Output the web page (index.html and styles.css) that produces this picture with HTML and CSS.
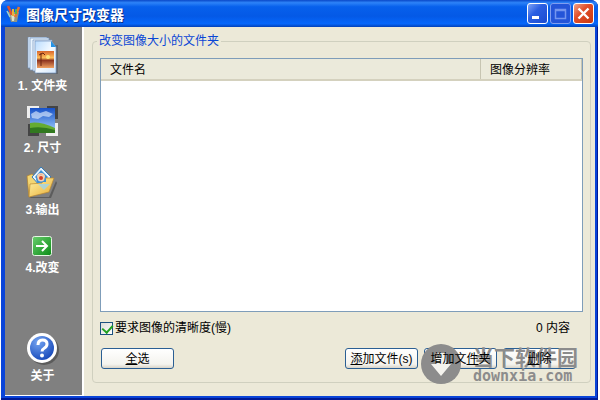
FILE: index.html
```html
<!DOCTYPE html>
<html lang="zh-CN">
<head>
<meta charset="utf-8">
<title>图像尺寸改变器</title>
<link rel="stylesheet" href="styles.css">
</head>
<body>
<div class="window">
  <header class="titlebar">
    <svg class="app-icon" width="16" height="18" viewBox="0 0 16 18" aria-hidden="true">
      <path d="M2 7h11l-2 10H5z" fill="#8f9487"/>
      <path d="M5 9h4l-1 7H6z" fill="#dfe2c9"/>
      <path d="M2 1l4 9" stroke="#e0522d" stroke-width="2.500"/>
      <path d="M7 4v7" stroke="#e9b33a" stroke-width="2"/>
      <path d="M13 2l-4 10" stroke="#e8742c" stroke-width="2.500"/>
      <path d="M10 4v5" stroke="#59b04c" stroke-width="2"/>
      <path d="M1 6l3 6" stroke="#9fd0c8" stroke-width="1.500"/>
    </svg>
    <h1 class="title">图像尺寸改变器</h1>
    <div class="controls">
      <button class="control" type="button" aria-label="最小化">
        <svg width="19" height="19" viewBox="0 0 19 19"><path d="M4 12h7v3H4z" fill="#fff"/></svg>
      </button>
      <button class="control control-dim" type="button" aria-label="最大化" disabled>
        <svg width="19" height="19" viewBox="0 0 19 19"><path d="M4.500 5.500h10v9h-10zM4 6.500h11" fill="none" stroke="#7595ee" stroke-width="1.500"/></svg>
      </button>
      <button class="control control-close" type="button" aria-label="关闭">
        <svg width="19" height="19" viewBox="0 0 19 19"><path d="M4.500 4.500l10 10M14.500 4.500l-10 10" stroke="#fff" stroke-width="2.400"/></svg>
      </button>
    </div>
  </header>

  <div class="content">
    <nav class="sidebar">
      <button class="step" type="button">
        <svg width="32" height="38" viewBox="0 0 32 38" aria-hidden="true">
          <defs>
            <linearGradient id="paper" x1="0" y1="0" x2="1" y2="1"><stop offset="0" stop-color="#b9dcff"/><stop offset="0.500" stop-color="#f5faff"/><stop offset="1" stop-color="#d3e6fb"/></linearGradient>
            <linearGradient id="sunset" x1="0" y1="0" x2="0" y2="1"><stop offset="0" stop-color="#d9662e"/><stop offset="0.400" stop-color="#ffc05a"/><stop offset="0.550" stop-color="#8e3420"/><stop offset="1" stop-color="#f0a161"/></linearGradient>
          </defs>
          <path d="M10 8h21v29H10z" fill="#505761" opacity="0.600"/>
          <path d="M1 0h19v31H1z" fill="#e4f1ff" stroke="#7294bb" stroke-width="0.700"/>
          <path d="M3 1h19v32H3z" fill="#e9f4ff" stroke="#7294bb" stroke-width="0.700"/>
          <path d="M6 3h19v31H6z" fill="#eef6ff" stroke="#7294bb" stroke-width="0.700"/>
          <path d="M8 4h16l5 6v26H8z" fill="url(#paper)" stroke="#7294bb" stroke-width="0.700"/>
          <path d="M24 4v6h5z" fill="#2493e6"/>
          <path d="M10 14h17v17H10z" fill="url(#sunset)"/>
          <path d="M14 16v13M12 18l4-2 2 2" fill="none" stroke="#6d2410"/>
          <circle cx="21" cy="20" r="2" fill="#ffe47c"/>
        </svg>
        <span>1. 文件夹</span>
      </button>
      <button class="step" type="button">
        <svg width="32" height="32" viewBox="0 0 32 32" aria-hidden="true">
          <defs><linearGradient id="sky" x1="0" y1="0" x2="0" y2="1"><stop offset="0" stop-color="#1550c8"/><stop offset="1" stop-color="#a8d5ff"/></linearGradient></defs>
          <path d="M0 1h12v3H3v9H0z" fill="#eee"/>
          <path d="M29 1h2v13h-3V4h-8V1z" fill="#444"/>
          <path d="M31 18v13H19v-3h9V18z" fill="#eee"/>
          <path d="M1 19v12h11v-3H4v-9z" fill="#444"/>
          <path d="M3 3h25v25H3z" fill="url(#sky)"/>
          <path d="M4 9l5-3 4 2 6-2 7 3-4 3-6-1-5 3-6-1z" fill="#e8f4ff" opacity="0.600"/>
          <path d="M3 18q9-2 25 5v5H3z" fill="#65ac32"/>
          <path d="M3 23q12-2 25 2v3H3z" fill="#31791f"/>
        </svg>
        <span>2. 尺寸</span>
      </button>
      <button class="step" type="button">
        <svg width="32" height="32" viewBox="0 0 32 32" aria-hidden="true">
          <defs><linearGradient id="folder" x1="0" y1="0" x2="1" y2="1"><stop offset="0" stop-color="#fff4a8"/><stop offset="1" stop-color="#e9ad35"/></linearGradient></defs>
          <path d="M3 30h20l7-16 1 2-6 15H5z" fill="#444" opacity="0.600"/>
          <path d="M1 9l5-2 4 3h14v9L3 30z" fill="#f3d673" stroke="#b3812b" stroke-width="0.700"/>
          <path d="M15 0l10 10-10 10L6 10z" fill="#e7f5ff" stroke="#377bb7"/>
          <path d="M15 3l7 7-7 7-6-7z" fill="#3f91d6"/>
          <circle cx="15" cy="10" r="4" fill="#f5d1b1"/><circle cx="15" cy="10" r="2.500" fill="#d44027"/>
          <path d="M3 30l1-13 12-1 4-5h8l-5 14z" fill="url(#folder)" stroke="#ba882f" stroke-width="0.700"/>
          <path d="M12 17h12l-6 6z" fill="#9ed5ec" opacity="0.800"/>
          <path d="M10 12q5-6 10 0v3h-4l-2 1h-3z" fill="#3f91d6"/>
          <circle cx="15" cy="11" r="3.500" fill="#f5d1b1"/><circle cx="15" cy="11" r="2" fill="#d44027"/>
        </svg>
        <span>3.输出</span>
      </button>
      <button class="step" type="button">
        <svg width="32" height="28" viewBox="0 0 32 28" aria-hidden="true">
          <defs><linearGradient id="go" x1="0" y1="0" x2="1" y2="1"><stop offset="0" stop-color="#69ce6d"/><stop offset="1" stop-color="#0a8b16"/></linearGradient></defs>
          <rect x="6.500" y="7.500" width="19" height="19" rx="2" fill="url(#go)" stroke="#e7f6e5"/>
          <path d="M10 17h11M16 12l5 5-5 5" fill="none" stroke="#fff" stroke-width="2"/>
        </svg>
        <span>4.改变</span>
      </button>
      <button class="step step-about" type="button">
        <svg width="32" height="32" viewBox="0 0 32 32" aria-hidden="true">
          <defs><radialGradient id="help" cx="0.350" cy="0.250" r="0.800"><stop offset="0" stop-color="#74a4f1"/><stop offset="1" stop-color="#1749ba"/></radialGradient></defs>
          <circle cx="17" cy="17" r="15" fill="#4b4b4b" opacity="0.700"/>
          <circle cx="15" cy="15" r="15" fill="#fff"/>
          <circle cx="15" cy="15" r="12" fill="url(#help)"/>
          <path d="M11 12q0-5 4.500-5t4.500 4q0 2.500-2.500 4t-2.500 3.500" fill="none" stroke="#fff" stroke-width="3"/>
          <circle cx="15" cy="22.500" r="2" fill="#fff"/>
        </svg>
        <span>关于</span>
      </button>
    </nav>

    <main class="main">
      <fieldset class="group">
        <legend class="legend">改变图像大小的文件夹</legend>
        <div class="list">
          <table class="table">
            <thead>
              <tr><th class="col-name" scope="col">文件名</th><th class="col-size" scope="col">图像分辨率</th></tr>
            </thead>
          </table>
        </div>
        <div class="options">
          <label class="check"><input class="checkbox" type="checkbox" checked>要求图像的清晰度(慢)</label>
          <output class="count">0 内容</output>
        </div>
        <div class="actions">
          <button class="button button-all" type="button"><span class="button-label"><u>全</u>选</span></button>
          <button class="button" type="button"><span class="button-label"><u>添</u>加文件(s)</span></button>
          <button class="button" type="button"><span class="button-label">增加文<u>件</u>夹</span></button>
          <button class="button" type="button"><span class="button-label"><u>删</u>除</span></button>
        </div>
      </fieldset>
    </main>
  </div>

  <div class="watermark">
    <svg width="40" height="40" viewBox="0 0 40 40" aria-hidden="true">
      <circle cx="20" cy="20" r="20" fill="#8c8c8c"/>
      <path d="M15 9h10v11h5L20 32 10 20h5z" fill="#f4f3ee"/>
    </svg>
    <div class="watermark-text">
      <span class="watermark-name">当下软件园</span>
      <span class="watermark-site">downxia.com</span>
    </div>
  </div>
</div>
</body>
</html>
```

FILE: styles.css
```css
* {
  box-sizing: border-box;
}

body {
  margin: 0;
  background: #fff;
  color: #000;
  font: 12px/16px "Liberation Sans", "Noto Sans CJK SC", sans-serif;
}

button {
  font: inherit;
  padding: 0;
}

.window {
  position: relative;
  display: flex;
  flex-direction: column;
  min-height: 100vh;
  margin: 0 2px 0 1px;
  padding: 0 3px 4px 4px;
  border-radius: 7px 7px 0 0;
  background: #0a44d8;
  box-shadow: inset -1px -2px #001a96;
}

.titlebar {
  display: flex;
  align-items: center;
  height: 27px;
  margin: 0 -3px 0 -4px;
  padding: 0 4px 0 5px;
  border-radius: 7px 7px 0 0;
  background: linear-gradient(#0a48c8, #2d83f8 10%, #0760ec 25%, #0459e6 60%, #0667fb 88%, #0341b8);
}

.title {
  flex: 1;
  margin: 0 0 0 4px;
  color: #fff;
  font: bold 14px/20px "Noto Sans CJK SC", sans-serif;
  text-shadow: 1px 1px #0a2f86;
}

.controls {
  display: flex;
  gap: 2px;
}

.control {
  display: flex;
  width: 21px;
  height: 21px;
  border: 1px solid #fff;
  border-radius: 3px;
  background: linear-gradient(135deg, #7ea3f7, #2b5fe2 40%, #1b4bd0);
}

.control-dim {
  border-color: #7f9df0;
  background: #2454d8;
}

.control-close {
  background: linear-gradient(135deg, #f0a389, #e2502c 40%, #c8370f);
}

.content {
  flex: 1;
  display: flex;
  background: #ece9d8;
}

.sidebar {
  display: flex;
  flex-direction: column;
  align-items: center;
  gap: 11px;
  width: 79px;
  padding: 10px 2px 11px 0;
  border: solid #fff;
  border-width: 0 2px 1px 0;
  background: #808080;
}

.step {
  display: flex;
  flex-direction: column;
  align-items: center;
  gap: 3px;
  border: 0;
  background: none;
  color: #fff;
  font-weight: bold;
}

.step-about {
  margin-top: auto;
}

.main {
  flex: 1;
  display: flex;
  padding: 6px 4px 13px 8px;
}

.group {
  flex: 1;
  display: flex;
  flex-direction: column;
  min-width: 0;
  margin: 0;
  padding: 9px 7px 13px;
  border: 1px solid #d0d0bf;
  border-radius: 4px;
}

.legend {
  padding: 0 2px;
  margin-left: -3px;
  color: #0a46d5;
}

.list {
  flex: 1;
  border: 1px solid #7f9db9;
  background: #fff;
}

.table {
  width: 100%;
  border-collapse: collapse;
  table-layout: fixed;
}

.table th {
  height: 21px;
  padding: 2px 9px 0;
  border-right: 1px solid #c7c5b2;
  border-bottom: 2px solid #d4d1be;
  background: #ebeadb;
  font-weight: normal;
  text-align: left;
}

.table .col-size {
  width: 101px;
}

.options {
  display: flex;
  align-items: center;
  justify-content: space-between;
  height: 32px;
  padding-right: 13px;
}

.check {
  display: flex;
  align-items: center;
  gap: 2px;
}

.checkbox {
  appearance: none;
  width: 13px;
  height: 13px;
  margin: 0;
  border: 1px solid #1c5180;
  background: linear-gradient(135deg, #dcdcd7, #fff);
}

.checkbox:checked::before {
  content: "";
  display: block;
  width: 5px;
  height: 8px;
  margin: 0 0 0 3px;
  border: solid #21a121;
  border-width: 0 2px 2px 0;
  transform: rotate(42deg);
}

.actions {
  display: flex;
  gap: 6px;
  margin-top: 4px;
  padding: 0 7px 0 1px;
}

.button {
  width: 73px;
  height: 21px;
  border: 1px solid #2b5f94;
  border-radius: 3px;
  background: linear-gradient(#fff, #f4f3ee 80%, #d9d4c8);
  line-height: 18px;
  white-space: nowrap;
}

.button-all {
  margin-right: auto;
}

.button-label {
  position: relative;
  z-index: 2;
}

.watermark {
  position: absolute;
  z-index: 1;
  right: 20px;
  bottom: 16px;
  display: flex;
  align-items: center;
  gap: 12px;
  color: #8c8c8c;
  pointer-events: none;
}

.watermark-text {
  display: flex;
  flex-direction: column;
}

.watermark-name {
  font: bold 21px/24px "Noto Sans CJK SC", sans-serif;
}

.watermark-site {
  font: bold 15px/16px "DejaVu Sans Mono", monospace;
}
```
